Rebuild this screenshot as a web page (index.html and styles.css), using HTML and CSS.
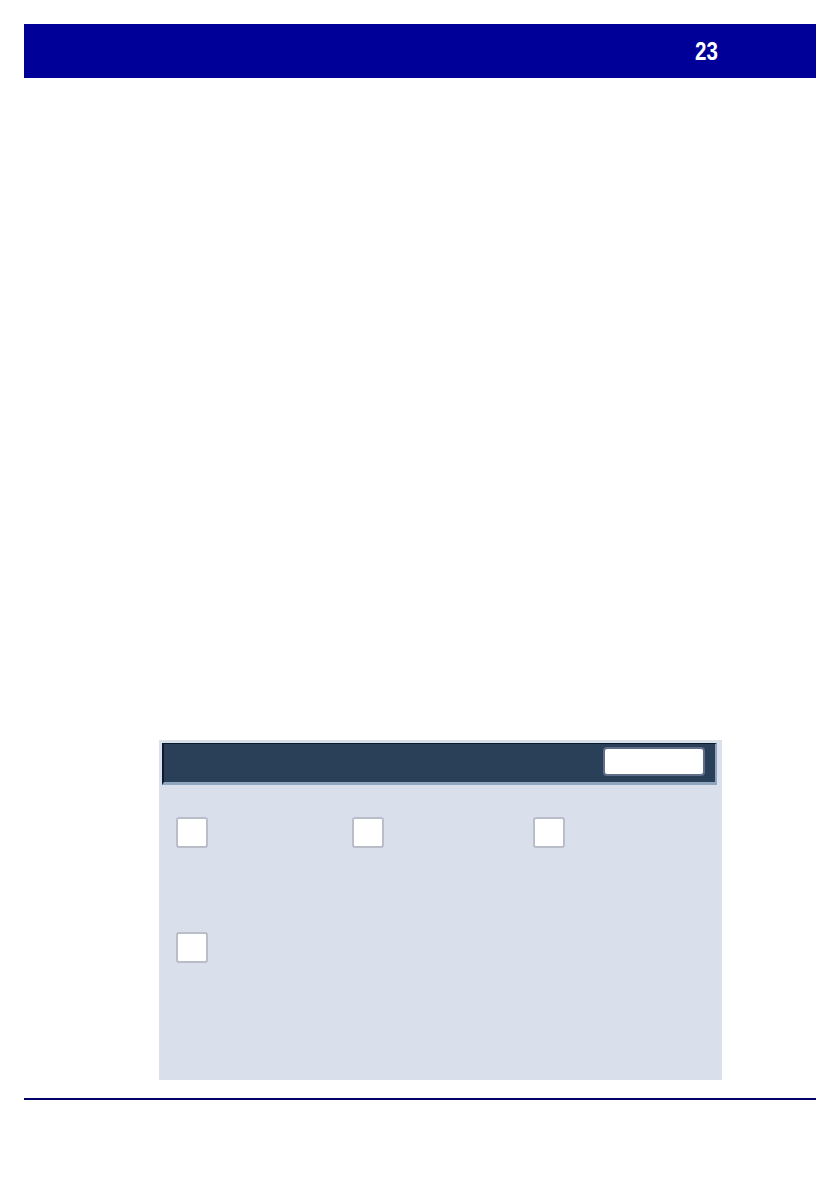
FILE: index.html
```html
<!DOCTYPE html>
<html lang="en">
<head>
<meta charset="utf-8">
<title>Page 23</title>
<link rel="stylesheet" href="styles.css">
</head>
<body>
<div class="page">
  <header class="topbar">
    <span class="pagenum">23</span>
  </header>
  <main class="content">
    <section class="panel">
      <div class="panel-bar">
        <div class="bar-button"></div>
      </div>
      <div class="options">
        <div class="check"></div>
        <div class="check"></div>
        <div class="check"></div>
        <div class="check"></div>
      </div>
    </section>
  </main>
  <div class="footer-line"></div>
</div>
</body>
</html>
```

FILE: styles.css
```css
html, body {
  margin: 0;
  padding: 0;
  background: #ffffff;
  font-family: "Liberation Sans", Arial, sans-serif;
}

.page {
  width: 792px;
  padding: 24px 24px 0 24px;
}

.topbar {
  height: 54px;
  background: #000099;
  display: flex;
  align-items: center;
  justify-content: flex-end;
  padding-right: 98px;
  box-sizing: border-box;
}

.pagenum {
  display: inline-block;
  color: #ffffff;
  font-weight: bold;
  font-size: 25px;
  line-height: 25px;
  transform: scaleX(0.82);
  transform-origin: right center;
  margin-top: 1px;
}

.content {
  padding-top: 662px;
  padding-left: 135px;
}

.panel {
  width: 563px;
  height: 340px;
  background: #d9e0eb;
  box-sizing: border-box;
  padding: 3px 5px 0 3px;
}

.panel-bar {
  height: 42px;
  box-sizing: border-box;
  background: #2a3f58;
  border-top: 1px solid #0c1a30;
  border-left: 2px solid #0c1a30;
  border-right: 2px solid #8fa6c0;
  border-bottom: 3px solid #8fa6c0;
  display: flex;
  align-items: flex-start;
  justify-content: flex-end;
  padding: 3px 10px 0 0;
}

.bar-button {
  width: 102px;
  height: 29px;
  box-sizing: border-box;
  background: #ffffff;
  border: 2px solid #606e89;
  border-radius: 4px;
}

.options {
  display: grid;
  grid-template-columns: 176px 181px 32px;
  row-gap: 84px;
  padding: 32px 0 0 14px;
}

.check {
  width: 32px;
  height: 31px;
  box-sizing: border-box;
  background: #ffffff;
  border: 2px solid #b9bdc9;
  border-radius: 3px;
}

.footer-line {
  margin-top: 18px;
  height: 2px;
  background: #000066;
}
```
